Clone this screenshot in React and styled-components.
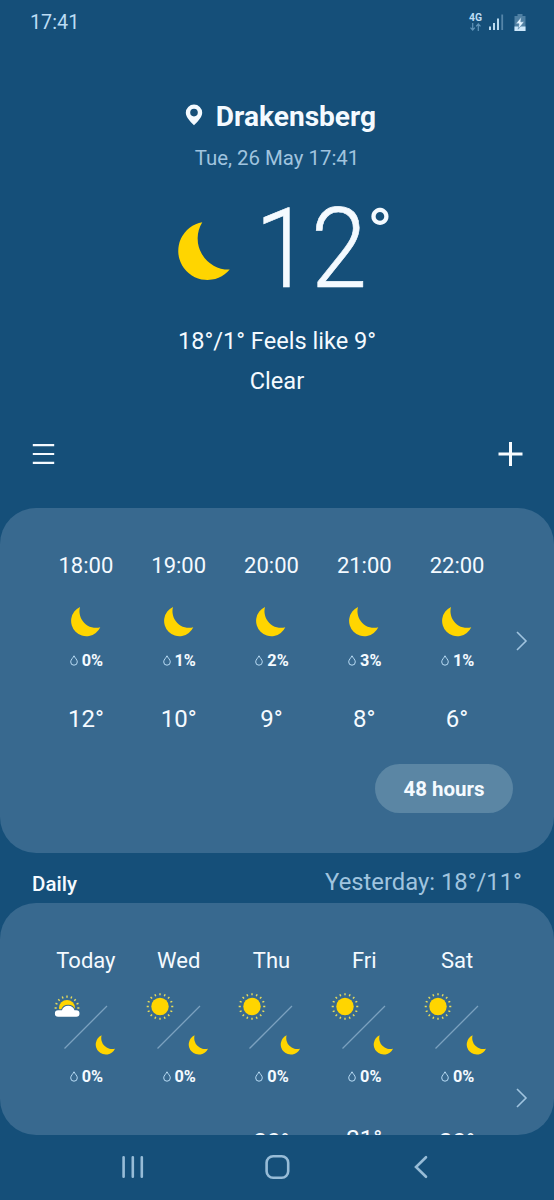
import React from "react";
import styled, { createGlobalStyle } from "styled-components";

const GlobalStyle = createGlobalStyle`
  * {
    box-sizing: border-box;
  }
  body {
    margin: 0;
    background: #154f79;
    font-family: Roboto, "Noto Sans", sans-serif;
    color: #f4faff;
  }
`;

const Screen = styled.div`
  width: 554px;
  height: 1200px;
  overflow: hidden;
  display: flex;
  flex-direction: column;
  background: #154f79;
  svg {
    display: block;
    flex: none;
  }
`;

const StatusBar = styled.header`
  height: 45px;
  padding: 0 28px 1px 30px;
  display: flex;
  align-items: center;
  justify-content: space-between;
  font-size: 19.8px;
  color: #bcdcf4;
`;

const StatusIcons = styled.div`
  display: flex;
  align-items: center;
`;

const Network = styled.div`
  width: 13px;
  margin-right: 7px;
  display: flex;
  flex-direction: column;
  align-items: center;
  gap: 1px;
  font-size: 10.4px;
  font-weight: 700;
  line-height: 9px;
`;

const Battery = styled.div`
  margin-left: 10px;
`;

const Hero = styled.section`
  height: 356px;
  display: flex;
  flex-direction: column;
  align-items: center;
`;

const Place = styled.h1`
  margin: 54px 0 0;
  height: 36px;
  display: flex;
  align-items: center;
  gap: 13px;
  padding-left: 7px;
  font-size: 28.1px;
  font-weight: 700;
  line-height: 36px;
  svg {
    margin-bottom: 4px;
  }
`;

const DateText = styled.div`
  margin-top: 11px;
  font-size: 20.4px;
  line-height: 24px;
  color: #a0c4df;
`;

const Current = styled.div`
  align-self: stretch;
  height: 130px;
  margin-top: 13px;
  padding-left: 178px;
  display: flex;
  align-items: flex-start;
`;

const MoonNow = styled.div`
  margin: 39px 25px 0 0;
`;

const Temperature = styled.div`
  width: 112px;
  font-size: 111px;
  font-weight: 300;
  line-height: 132px;
  transform: scaleX(0.91);
  transform-origin: left;
  -webkit-text-stroke: 0.7px #f4faff;
`;

const DegreeSign = styled.div`
  margin-top: 21px;
  font-size: 69px;
  line-height: 60px;
`;

const Summary = styled.div`
  margin-top: 8px;
  font-size: 23.6px;
  line-height: 40px;
  text-align: center;
`;

const Toolbar = styled.nav`
  height: 107px;
  padding: 0 31px 2px 32px;
  display: flex;
  align-items: center;
  justify-content: space-between;
`;

const Card = styled.section`
  height: ${(props) => props.$height}px;
  flex: none;
  border-radius: 36px;
  background: #38698f;
  overflow: hidden;
  display: flex;
  flex-direction: column;
`;

const Forecast = styled.div`
  display: flex;
  align-items: flex-start;
  padding: 42px 0 0 39.5px;
`;

const Column = styled.div`
  width: 92.8px;
  display: flex;
  flex-direction: column;
  align-items: center;
`;

const Label = styled.div`
  font-size: 22px;
  line-height: 32px;
`;

const MoonSlot = styled.div`
  margin: 25px 1px 0 0;
`;

const Rain = styled.div`
  margin-top: ${(props) => props.$top}px;
  display: flex;
  align-items: center;
  gap: 4px;
  padding-left: 1px;
  font-size: 16.3px;
  font-weight: 700;
  line-height: 20px;
  svg {
    margin-bottom: 2px;
  }
`;

const Degrees = styled.div`
  margin-top: ${(props) => props.$top}px;
  font-size: 24px;
  line-height: 32px;
`;

const Next = styled.div`
  margin: ${(props) => props.$top}px 0 0 13px;
`;

const HoursButton = styled.button`
  align-self: flex-end;
  width: 138px;
  height: 49px;
  margin: 29px 41px 0 0;
  padding: 1px 0 0;
  border: none;
  border-radius: 25px;
  background: #5b86a4;
  color: #f4faff;
  font-family: inherit;
  font-size: 20.5px;
  font-weight: 700;
`;

const SectionHeader = styled.div`
  height: 50px;
  flex: none;
  padding: 0 32px;
  display: flex;
  justify-content: space-between;
`;

const SectionTitle = styled.h2`
  margin: 19px 0 0;
  font-size: 20.5px;
  font-weight: 500;
  line-height: 24px;
`;

const Yesterday = styled.div`
  margin-top: 15px;
  font-size: 23.8px;
  line-height: 28px;
  color: #a0c4df;
`;

const DayNight = styled.div`
  width: 64px;
  height: 62px;
  margin: 16px 2px 0 0;
`;

const AndroidNav = styled.footer`
  height: 64px;
  padding: 0 126px 0 122px;
  display: flex;
  align-items: center;
  justify-content: space-between;
`;

const HomeButton = styled.div`
  margin-right: 4px;
`;

const moonPath =
  "M10 0A15.3 15.3 0 1 0 30.3 20.3A16.6 16.6 0 0 1 10 0Z";

const Moon = () => (
  <svg width="31" height="30" viewBox="0 0 31 30">
    <path d={moonPath} fill="#ffd500" />
  </svg>
);

const BigMoon = () => (
  <svg width="52" height="59" viewBox="0 0 52 59">
    <path
      d="M24.3 .2A29.1 29.1 0 1 0 51.7 47.5A31 31 0 0 1 24.3 .2Z"
      fill="#ffd500"
    />
  </svg>
);

const Drop = () => (
  <svg width="8" height="11" viewBox="0 0 8 11">
    <path
      d="M4 .8C3.2 2.8.7 4.6.7 6.9A3.3 3.3 0 0 0 7.3 6.9C7.3 4.6 4.8 2.8 4 .8Z"
      fill="none"
      stroke="#b9dcf5"
    />
  </svg>
);

const Rays = ({ cx, cy, from, to, inner, outer }) => {
  const angles = [];
  for (let a = from; a <= to; a += 22.5) angles.push(a);
  return angles.map((a) => (
    <line
      key={a}
      x1={cx + inner}
      y1={cy}
      x2={cx + outer}
      y2={cy}
      stroke="#e6dc5c"
      strokeWidth="1.4"
      transform={`rotate(${a} ${cx} ${cy})`}
    />
  ));
};

// day icon top left, night icon bottom right, split by a diagonal
const DayNightIcon = ({ cloudy }) => (
  <svg width="64" height="62" viewBox="0 0 64 62">
    {cloudy ? (
      <g>
        <Rays cx={14} cy={15} from={-180} to={0} inner={10.3} outer={12.4} />
        <circle cx="14" cy="15" r="8" fill="#ffd500" />
        <path
          d="M5.1 23.7A3.2 3.2 0 0 1 5.1 17.3H8.9A6.6 6.6 0 0 1 21.5 17.3H23.3A3.2 3.2 0 0 1 23.3 23.7Z"
          fill="#fff"
          stroke="#38698f"
          strokeWidth="2"
          paintOrder="stroke"
        />
      </g>
    ) : (
      <g>
        <Rays cx={14} cy={13.5} from={0} to={337.5} inner={11.2} outer={13.3} />
        <circle cx="14" cy="13.5" r="8.7" fill="#ffd500" />
      </g>
    )}
    <path d="M11.5 55.5L54 13" stroke="#7ba1bf" strokeWidth="1.3" />
    <path
      d={moonPath}
      fill="#ffd500"
      transform="translate(42 42.3) scale(.66)"
    />
  </svg>
);

const Chevron = () => (
  <svg width="12" height="20" viewBox="0 0 12 20">
    <path
      d="M1 1L10 10L1 19"
      fill="none"
      stroke="#a0c4df"
      strokeWidth="1.6"
    />
  </svg>
);

const hours = [
  { time: "18:00", rain: 0, temp: 12 },
  { time: "19:00", rain: 1, temp: 10 },
  { time: "20:00", rain: 2, temp: 9 },
  { time: "21:00", rain: 3, temp: 8 },
  { time: "22:00", rain: 1, temp: 6 },
];

// gap: distance from the rain row down to the day's high
const days = [
  { name: "Today", rain: 0, cloudy: true },
  { name: "Wed", rain: 0 },
  { name: "Thu", rain: 0, high: 20, gap: 39 },
  { name: "Fri", rain: 0, high: 21, gap: 36 },
  { name: "Sat", rain: 0, high: 20, gap: 39 },
];

const App = () => {
  return (
    <>
      <GlobalStyle />
      <Screen>
        <StatusBar>
          <span>17:41</span>
          <StatusIcons>
            <Network>
              4G
              <svg width="11" height="8" viewBox="0 0 11 8">
                <path
                  d="M2.7 0V7M.5 4.6L2.7 7L4.9 4.6M8.3 8V1M6.1 3.4L8.3 1L10.5 3.4"
                  fill="none"
                  stroke="#5f93b8"
                  strokeWidth="1.2"
                />
              </svg>
            </Network>
            <svg width="15" height="16" viewBox="0 0 15 16">
              <path
                d="M1 16V12.5M5 16V9M9 16V4.5"
                stroke="#cde8fb"
                strokeWidth="1.8"
              />
              <path d="M13.2 16V.5" stroke="#5585a8" strokeWidth="1.8" />
            </svg>
            <Battery>
              <svg width="12" height="17" viewBox="0 0 12 17">
                <path d="M3.5 0H8.5V2H11.5V17H.5V2H3.5Z" fill="#4f80a3" />
                <path d="M.5 12.5H11.5V17H.5Z" fill="#cde8fb" />
                <path
                  d="M7.2 3L1.8 9.8H5L4.2 15.2L10.2 7.8H6.8Z"
                  fill="#e2f3ff"
                  stroke="#4f80a3"
                  strokeWidth=".6"
                />
              </svg>
            </Battery>
          </StatusIcons>
        </StatusBar>

        <Hero>
          <Place>
            <svg width="18" height="22" viewBox="0 0 18 22">
              <path
                fillRule="evenodd"
                d="M9 .5A8.2 8.2 0 0 0 .8 8.7C.8 13.5 6 18 9 21.3C12 18 17.2 13.5 17.2 8.7A8.2 8.2 0 0 0 9 .5ZM9 4.8A3.8 3.8 0 1 1 9 12.4A3.8 3.8 0 0 1 9 4.8Z"
                fill="#f4faff"
              />
            </svg>
            Drakensberg
          </Place>
          <DateText>Tue, 26 May 17:41</DateText>
          <Current>
            <MoonNow>
              <BigMoon />
            </MoonNow>
            <Temperature>12</Temperature>
            <DegreeSign>°</DegreeSign>
          </Current>
          <Summary>
            18°/1° Feels like 9°
            <br />
            Clear
          </Summary>
        </Hero>

        <Toolbar>
          <svg width="23" height="20" viewBox="0 0 23 20">
            <path
              d="M.8 1.2H22.2M.8 10H22.2M.8 18.8H22.2"
              stroke="#f4faff"
              strokeWidth="2.2"
            />
          </svg>
          <svg width="25" height="24" viewBox="0 0 25 24">
            <path
              d="M.5 12H24.5M12.5 0V24"
              stroke="#f8fcff"
              strokeWidth="3"
            />
          </svg>
        </Toolbar>

        <Card $height={345}>
          <Forecast>
            {hours.map((hour) => (
              <Column key={hour.time}>
                <Label>{hour.time}</Label>
                <MoonSlot>
                  <Moon />
                </MoonSlot>
                <Rain $top={14}>
                  <Drop />
                  {hour.rain}%
                </Rain>
                <Degrees $top={32}>{hour.temp}°</Degrees>
              </Column>
            ))}
            <Next $top={81}>
              <Chevron />
            </Next>
          </Forecast>
          <HoursButton>48 hours</HoursButton>
        </Card>

        <SectionHeader>
          <SectionTitle>Daily</SectionTitle>
          <Yesterday>Yesterday: 18°/11°</Yesterday>
        </SectionHeader>

        <Card $height={232}>
          <Forecast>
            {days.map((day) => (
              <Column key={day.name}>
                <Label>{day.name}</Label>
                <DayNight>
                  <DayNightIcon cloudy={day.cloudy} />
                </DayNight>
                <Rain $top={12}>
                  <Drop />
                  {day.rain}%
                </Rain>
                {day.high && <Degrees $top={day.gap}>{day.high}°</Degrees>}
              </Column>
            ))}
            <Next $top={143}>
              <Chevron />
            </Next>
          </Forecast>
        </Card>

        <AndroidNav>
          <svg width="22" height="24" viewBox="0 0 22 24">
            <path
              d="M1.6 2.2V21.8M10.8 2.2V21.8M19.8 2.2V21.8"
              stroke="#97bcd7"
              strokeWidth="2.6"
              strokeLinecap="round"
            />
          </svg>
          <HomeButton>
            <svg width="25" height="24" viewBox="0 0 25 24">
              <rect
                x="1.6"
                y="1.3"
                width="21.6"
                height="21.4"
                rx="6.5"
                fill="none"
                stroke="#97bcd7"
                strokeWidth="2.6"
              />
            </svg>
          </HomeButton>
          <svg width="14" height="24" viewBox="0 0 14 24">
            <path
              d="M12 2.2L2 12L12 21.8"
              fill="none"
              stroke="#97bcd7"
              strokeWidth="2.6"
              strokeLinecap="round"
            />
          </svg>
        </AndroidNav>
      </Screen>
    </>
  );
};

export default App;
